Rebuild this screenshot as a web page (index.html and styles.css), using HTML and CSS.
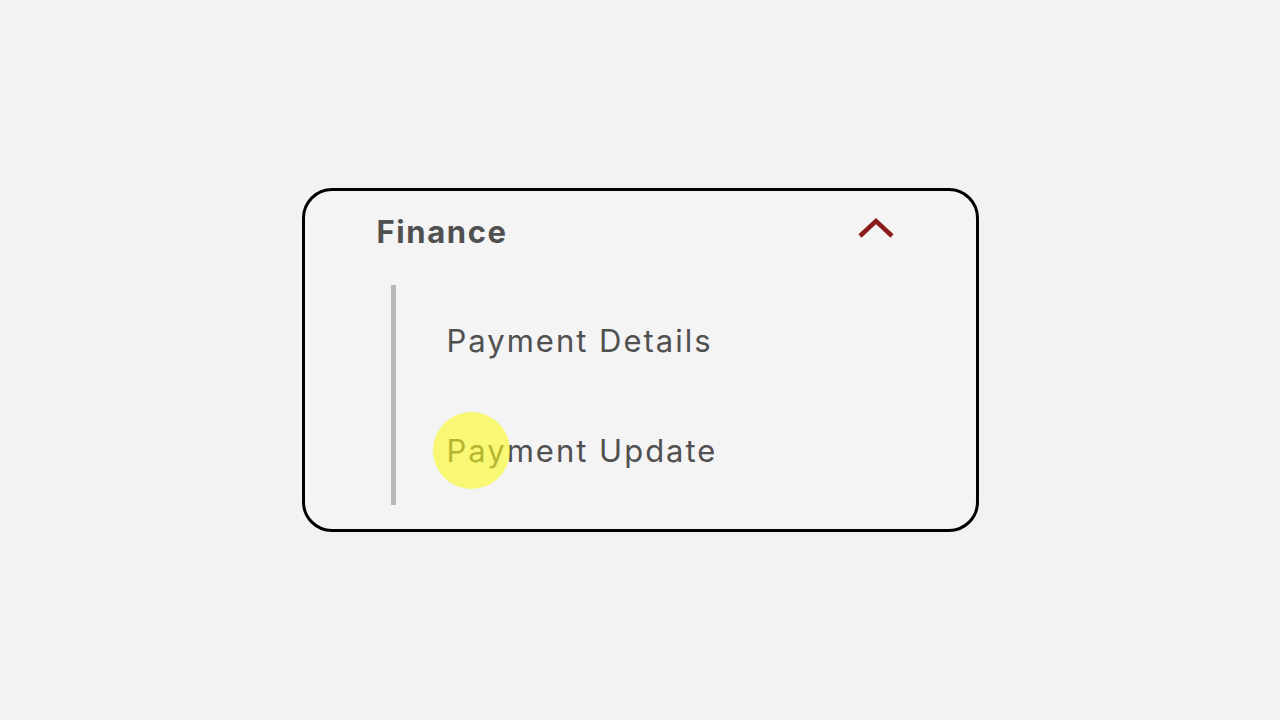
FILE: index.html
```html
<!DOCTYPE html>
<html>
<head>
<meta charset="utf-8">
<link rel="stylesheet" href="styles.css">
</head>
<body>
<div class="stage">
  <div class="card">
    <div class="header">
      <span class="title">Finance</span>
      <svg class="chevron" width="36" height="22" viewBox="0 0 36 22"><path d="M2 19 L18 4 L34 19" fill="none" stroke="#8a1c1c" stroke-width="4.5"/></svg>
    </div>
    <div class="sub">
      <div class="item">Payment Details</div>
      <div class="item"><span class="hl"></span>Payment Update</div>
    </div>
  </div>
</div>
</body>
</html>
```
FILE: styles.css
```css
html, body { margin: 0; padding: 0; }
body {
  background: #f2f2f2;
  font-family: Inter, "Liberation Sans", sans-serif;
  color: #505050;
}
.stage {
  width: 1280px;
  height: 720px;
  display: flex;
  align-items: center;
  justify-content: center;
}
.card {
  box-sizing: border-box;
  width: 677px;
  height: 344px;
  border: 3px solid #000;
  border-radius: 30px;
  background: #f4f4f4;
  padding: 0 82px 0 72px;
}
.header {
  height: 80px;
  display: flex;
  align-items: center;
  justify-content: space-between;
  margin-bottom: 14px;
}
.title {
  font-size: 31px;
  font-weight: 700;
  letter-spacing: 1.6px;
}
.chevron { margin-top: -6px; }
.sub {
  margin-left: 14px;
  border-left: 5px solid #b8b8b8;
  padding-left: 51px;
  height: 220px;
}
.item {
  position: relative;
  height: 110px;
  display: flex;
  align-items: center;
  font-size: 31px;
  letter-spacing: 2px;
}
.hl {
  position: absolute;
  left: -14px;
  top: 17px;
  width: 77px;
  height: 77px;
  border-radius: 50%;
  background: rgba(250, 250, 30, 0.6);
}
```
